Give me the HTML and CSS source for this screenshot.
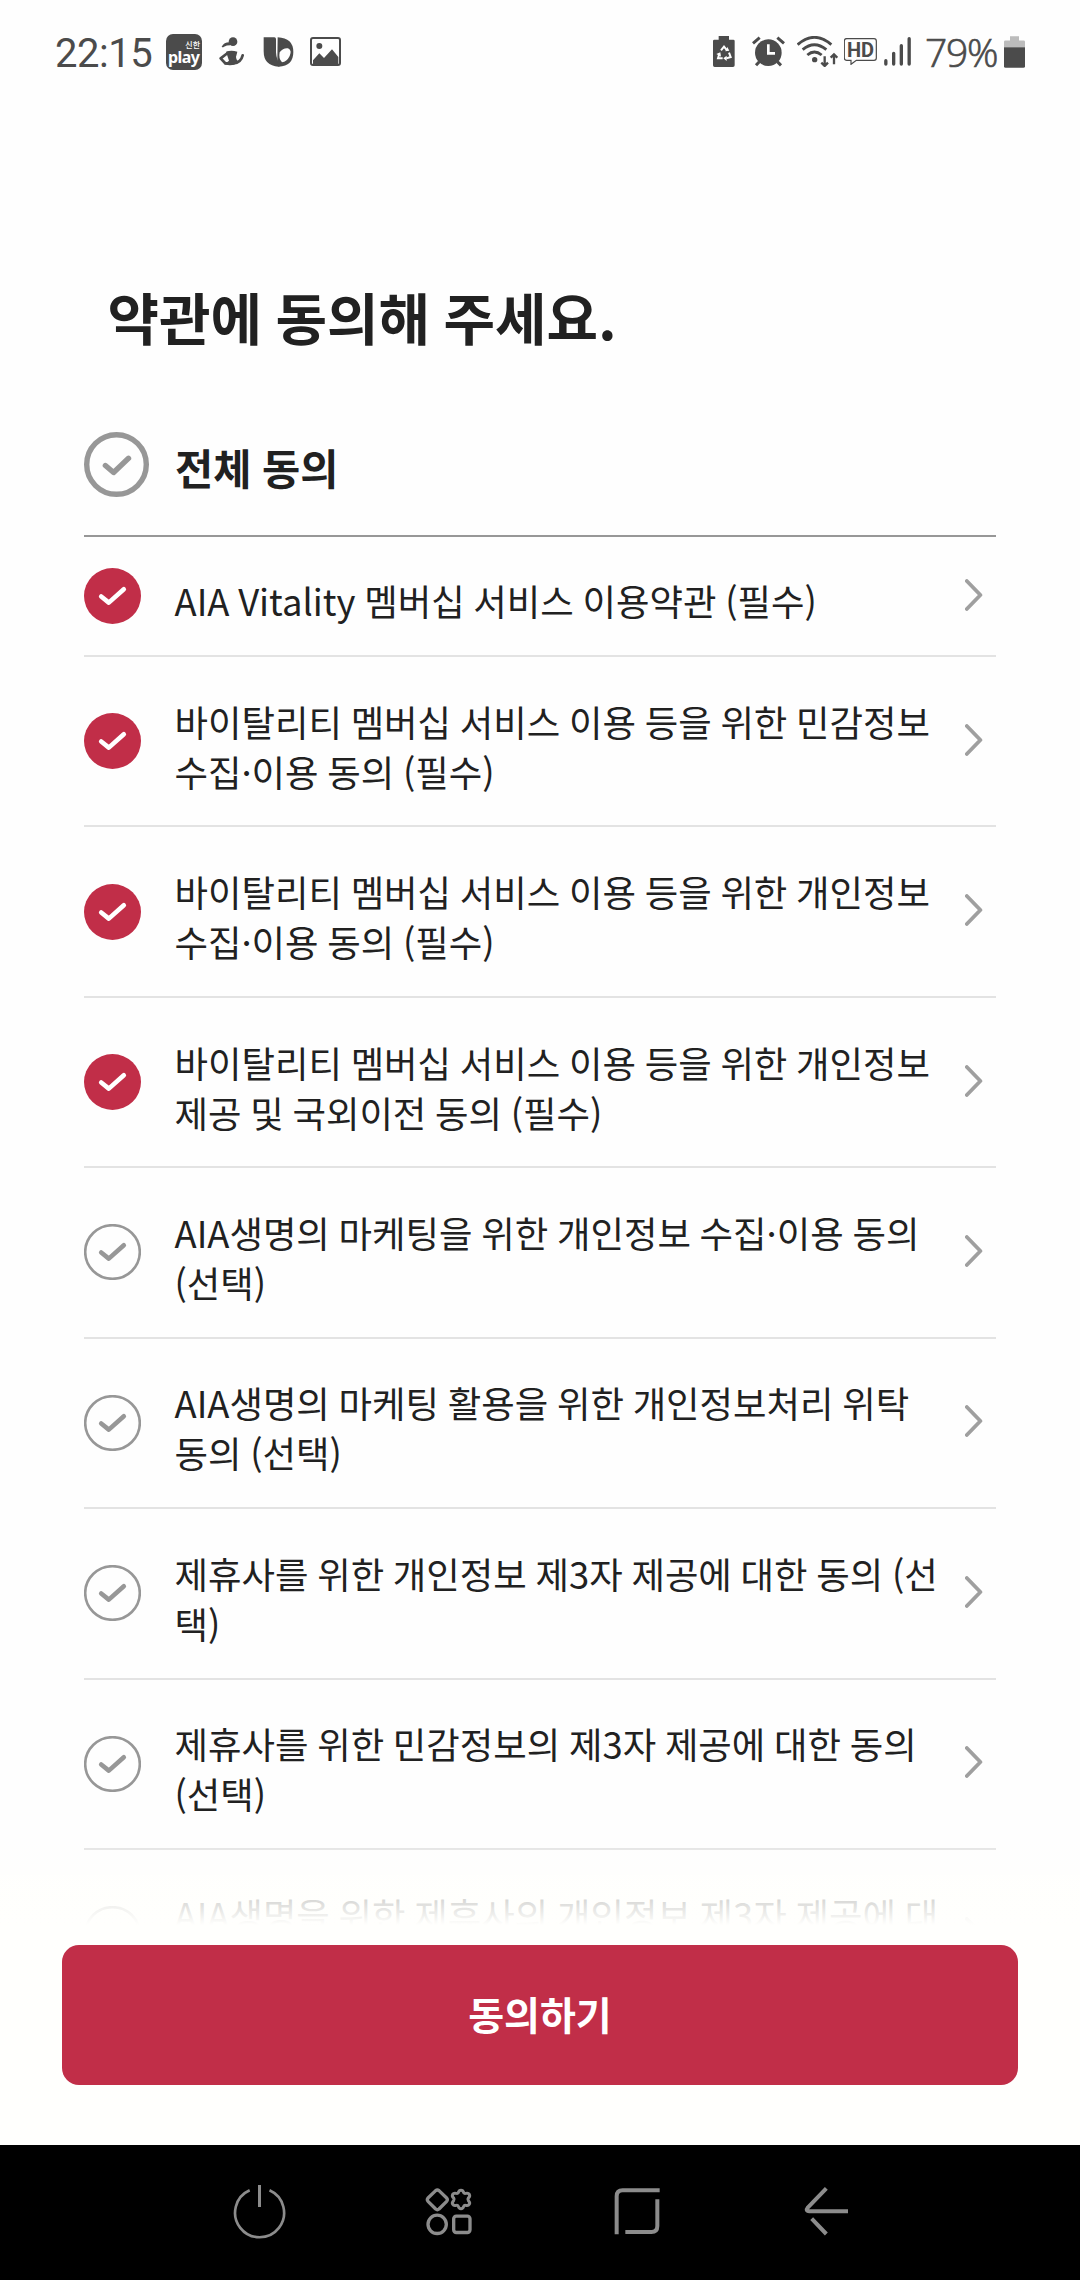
FILE: index.html
```html
<!DOCTYPE html>
<html lang="ko">
<head>
<meta charset="utf-8">
<title>약관 동의</title>
<link rel="stylesheet" href="styles.css">
</head>
<body>
<svg class="defs" aria-hidden="true">
  <symbol id="on" viewBox="0 0 57 56"><ellipse cx="28.5" cy="28" rx="28.5" ry="28" fill="#c12e48"/><path d="M17.200 28.500 24.800 34.600 39.800 21.200" fill="none" stroke="#fff" stroke-width="4.600" stroke-linecap="round" stroke-linejoin="round"/></symbol>
  <symbol id="off" viewBox="0 0 57 56"><ellipse cx="28.5" cy="28" rx="27.3" ry="26.8" fill="none" stroke="#979797" stroke-width="2.6"/><path d="M17.200 28.500 24.800 34.600 39.800 21.200" fill="none" stroke="#979797" stroke-width="4.600" stroke-linecap="round" stroke-linejoin="round"/></symbol>
  <symbol id="next" viewBox="0 0 18 32"><path d="M1.8 2 15.4 16 1.8 30" fill="none" stroke="#9f9f9f" stroke-width="3.8" stroke-linejoin="round" stroke-linecap="round"/></symbol>
</svg>

<header class="status">
  <span class="clock">22:15</span>
  <span class="play"><span class="play-top">신한</span><span class="play-name">play</span></span>
  <svg class="i-figure" viewBox="537 50 75 87"><circle cx="579" cy="64" r="13"/><path d="M568 66q-16 0-23 13 3 3 7 0 8-4 19-4zM558 94q16-6 34 0l-4 16q0 8 6 14-12 13-30 10l-12-1 15-12z"/><path d="M563 98 542 114 555 128 580 129Q603 127 608 105" fill="none" stroke="#4b4b4b" stroke-width="8" stroke-linejoin="round" stroke-linecap="round"/></svg>
  <svg class="i-bixby" viewBox="669 48 93 90"><path d="M671 49h32q5 0 5 5v40q1 26 16 38l-8 5q-45-2-45-46z"/><path fill-rule="evenodd" d="M713 49q47 2 47 44 0 42-44 44-6-6-4-18zM719 94q-4 19 7 30 14-1 23-19 8-17-5-23-14-2-25 12z"/></svg>
  <svg class="i-image" viewBox="810 50 93 87"><rect x="813" y="53" width="87" height="81" rx="6" fill="none" stroke="#4b4b4b" stroke-width="6"/><circle cx="838" cy="77" r="9"/><path d="M819 120 838 99 852 113 876 87 895 110v21h-76z"/></svg>
  <span class="spacer"></span>
  <svg class="i-saver" viewBox="69 45 66 93"><path d="M86 45h31v11h13q4 0 4 4v73q0 5-5 5H74q-5 0-5-5V60q0-4 4-4h13z"/><path d="M93 88 102 77 111 88M117 95 122 108 109 112M98 112H84L88 98" fill="none" stroke="#fff" stroke-width="6"/><path d="M106 91 118 89 112 78zM110 104v16l-10-8zM79 99l12-5 2 13z" fill="#fff"/></svg>
  <svg class="i-alarm" viewBox="185 46 99 93"><path d="M188 68 208 51M261 51 281 68" stroke="#4b4b4b" stroke-width="9"/><circle cx="234" cy="96" r="40"/><path d="M207 123 197 134M261 123 272 134" stroke="#4b4b4b" stroke-width="9"/><path d="M234 71v27h20" fill="none" stroke="#fff" stroke-width="8"/></svg>
  <svg class="i-wifi" viewBox="320 45 123 93"><g fill="none" stroke="#4b4b4b" stroke-width="8.5"><path d="M322 71Q372 27 423 71M337 86Q372 56 408 86M351 102Q372 84 394 102"/><path d="M403 106v28M393 125l10 10 10-10M431 130v-29M421 110l10-10 10 10" stroke-width="7"/></g><circle cx="373" cy="116" r="8"/></svg>
  <span class="hd"><svg viewBox="461 54 99 81"><path d="M469 56h82q7 0 7 7v51q0 7-7 7h-53l-16 12v-12h-13q-7 0-7-7V63q0-7 7-7z" fill="none" stroke="#4b4b4b" stroke-width="3.6"/></svg><b>HD</b></span>
  <svg class="i-signal" viewBox="584 53 81 87"><path d="M589.500 124v10M613 102v32M636 79v55M659.500 58v76" stroke="#4b4b4b" stroke-width="10" stroke-linecap="round"/></svg>
  <span class="percent">79%</span>
  <svg class="i-battery" viewBox="942 45 63 95"><path d="M960 45h27v13h14q4 0 4 4v16h-63V62q0-4 4-4h14z" fill="#bcbcbc"/><path d="M942 78h63v57q0 5-5 5h-53q-5 0-5-5z"/></svg>
</header>

<main class="terms">
  <h1>약관에 동의해 주세요.</h1>
  <div class="all">
    <svg class="all-check" viewBox="0 0 65 65"><circle cx="32.500" cy="32.500" r="29.800" fill="none" stroke="#979797" stroke-width="5.400"/><path d="M21.400 33.500 29.600 40.500 44.500 26.300" fill="none" stroke="#979797" stroke-width="5.400" stroke-linecap="round" stroke-linejoin="round"/></svg>
    <span>전체 동의</span>
  </div>
  <ul class="list">
    <li class="single"><svg class="check"><use href="#on"/></svg><p>AIA Vitality 멤버십 서비스 이용약관 (필수)</p><svg class="next"><use href="#next"/></svg></li>
    <li><svg class="check"><use href="#on"/></svg><p>바이탈리티 멤버십 서비스 이용 등을 위한 민감정보<br>수집·이용 동의 (필수)</p><svg class="next"><use href="#next"/></svg></li>
    <li><svg class="check"><use href="#on"/></svg><p>바이탈리티 멤버십 서비스 이용 등을 위한 개인정보<br>수집·이용 동의 (필수)</p><svg class="next"><use href="#next"/></svg></li>
    <li><svg class="check"><use href="#on"/></svg><p>바이탈리티 멤버십 서비스 이용 등을 위한 개인정보<br>제공 및 국외이전 동의 (필수)</p><svg class="next"><use href="#next"/></svg></li>
    <li><svg class="check"><use href="#off"/></svg><p>AIA생명의 마케팅을 위한 개인정보 수집·이용 동의<br>(선택)</p><svg class="next"><use href="#next"/></svg></li>
    <li><svg class="check"><use href="#off"/></svg><p>AIA생명의 마케팅 활용을 위한 개인정보처리 위탁<br>동의 (선택)</p><svg class="next"><use href="#next"/></svg></li>
    <li><svg class="check"><use href="#off"/></svg><p>제휴사를 위한 개인정보 제3자 제공에 대한 동의 (선<br>택)</p><svg class="next"><use href="#next"/></svg></li>
    <li><svg class="check"><use href="#off"/></svg><p>제휴사를 위한 민감정보의 제3자 제공에 대한 동의<br>(선택)</p><svg class="next"><use href="#next"/></svg></li>
    <li><svg class="check"><use href="#off"/></svg><p>AIA생명을 위한 제휴사의 개인정보 제3자 제공에 대<br>&nbsp;</p><svg class="next"><use href="#next"/></svg></li>
  </ul>
  <div class="fade"></div>
</main>

<footer class="action"><button type="button">동의하기</button></footer>

<nav class="nav">
  <svg width="54" height="55" viewBox="99 162 162 165"><path d="M149 181A73.500 73.500 0 1 0 208.500 181" stroke-width="8"/><path d="M178.500 165v66" stroke-width="9"/></svg>
  <svg width="48" height="49" viewBox="672 171 144 147" stroke-width="10" stroke-linejoin="round"><path d="M704 182 681 204Q677 209 681 214L704 237Q709 241 714 237L737 214Q741 209 737 204L714 182Q709 178 704 182Z"/><path d="M780 181q6 0 8 7 2 3 6 2 8-2 11 3 3 6-3 11-3 4 0 8 6 6 3 11-3 5-11 3-4-1-6 3-2 7-8 7t-8-7q-2-4-6-3-8 2-11-3-3-5 3-11 3-4 0-8-6-5-3-11 3-5 11-3 4 1 6-2 2-7 8-7z" stroke-width="9"/><circle cx="708.500" cy="283" r="27.500"/><rect x="758" y="258.500" width="49" height="49" rx="8"/></svg>
  <svg width="47" height="48" viewBox="162 171 141 144" stroke-width="12"><path d="M170 313V199Q170 181 188 181H299M292 208V288Q292 306 274 306H196"/></svg>
  <svg width="45" height="50" viewBox="732 168 135 150" stroke-width="12"><path d="M799 175 744 232Q735 243.500 748 243.500H864M755 266 799 312" stroke-linejoin="round"/></svg>
</nav>
</body>
</html>
```
FILE: styles.css
```css
* { box-sizing: border-box; }

body {
  margin: 0;
  width: 1080px;
  height: 2280px;
  display: flex;
  flex-direction: column;
  overflow: hidden;
  background: #fefefe;
  color: #212121;
  font-family: "Noto Sans CJK KR", sans-serif;
}

svg { display: block; flex: none; }
.defs { position: absolute; width: 0; height: 0; }

/* status bar */
.status {
  height: 104px;
  flex: none;
  display: flex;
  align-items: center;
  padding: 0 55px 1px;
  fill: #4b4b4b;
  color: #4b4b4b;
  white-space: nowrap;
}
.clock { width: 111px; font: 400 40px/60px Roboto, sans-serif; letter-spacing: -.5px; padding-top: 4px; }
.play {
  width: 36px;
  height: 36px;
  border-radius: 7px;
  background: #4b4b4b;
  color: #fff;
  display: flex;
  flex-direction: column;
  padding: 5px 2px 0;
}
.play-top { font-size: 8px; line-height: 12px; text-align: right; font-weight: 500; }
.play-name { font: 700 16px/12px "Noto Sans", sans-serif; letter-spacing: -.6px; }
.i-figure { width: 25px; height: 29px; margin-left: 17px; }
.i-bixby { width: 31px; height: 30px; margin-left: 19px; }
.i-image { width: 31px; height: 29px; margin-left: 16px; }
.spacer { flex: 1; }
.i-saver { width: 22px; height: 31px; }
.i-alarm { width: 33px; height: 31px; margin-left: 16.500px; }
.i-wifi { width: 41px; height: 31px; margin-left: 12.500px; }
.hd { width: 33px; height: 27px; margin-left: 6px; display: grid; }
.hd svg { width: 33px; height: 27px; grid-area: 1 / 1; }
.hd b { grid-area: 1 / 1; font: 700 20px/24px Roboto, sans-serif; text-align: center; }
.i-signal { width: 27px; height: 29px; margin-left: 7px; }
.percent {
  width: 79px;
  margin-left: 14px;
  font: 300 39px/60px "Open Sans", sans-serif;
  letter-spacing: -1.200px;
  -webkit-text-stroke: .7px #4b4b4b;
}
.i-battery { width: 21px; height: 32px; }

/* terms */
.terms {
  position: relative;
  height: 1821px;
  flex: none;
  overflow: hidden;
  padding: 0 84px;
}
h1 {
  margin: 170px 0 0 23.500px;
  font-size: 56px;
  line-height: 84px;
  font-weight: 700;
  word-spacing: -2.200px;
  white-space: nowrap;
}
.all {
  height: 179px;
  padding-top: 41px;
  display: flex;
  align-items: center;
  gap: 26px;
  border-bottom: 2px solid #979797;
  font-size: 41.500px;
  font-weight: 700;
  word-spacing: -1px;
}
.all-check { width: 65px; height: 65px; margin-bottom: 5px; }
.list { list-style: none; margin: 0; padding: 0; }
.list li {
  height: 170.430px;
  display: flex;
  align-items: center;
  border-bottom: 2px solid #e3e3e3;
}
.list .single { height: 120px; }
.check { width: 57px; height: 56px; }
.list p {
  flex: 1;
  margin: 0 0 0 33.500px;
  padding-top: 9px;
  font-size: 36.400px;
  line-height: 50px;
  word-spacing: -1.450px;
  white-space: nowrap;
}
.list .single p { padding-top: 7px; }
.next { width: 18px; height: 32px; margin: 0 13px 3px 0; }
.fade {
  position: absolute;
  inset: auto 0 0;
  height: 85px;
  background: linear-gradient(rgba(255, 255, 252, 0), rgba(255, 255, 252, .79) 64%, #fffffd);
}

/* bottom action */
.action { height: 220px; flex: none; padding: 20px 62px 60px; background: #fffffd; }
button {
  width: 100%;
  height: 140px;
  border: 0;
  border-radius: 17px;
  background: #c12e48;
  color: #fff;
  padding: 0 0 4px;
  font: 700 39px/50px "Noto Sans CJK KR", sans-serif;
}

/* system navigation */
.nav {
  height: 135px;
  flex: none;
  display: grid;
  grid-template-columns: repeat(4, 188.700px);
  place-items: center;
  padding: 0 0 3px 166px;
  background: #000;
  fill: none;
  stroke: #8c8c8c;
}
```
